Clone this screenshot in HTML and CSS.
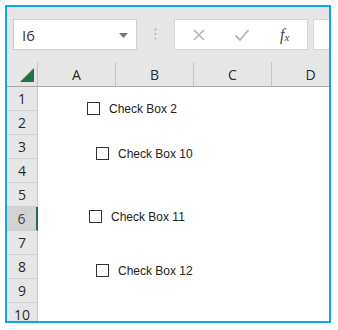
FILE: index.html
```html
<!DOCTYPE html>
<html>
<head>
<meta charset="utf-8">
<link rel="stylesheet" href="styles.css">
</head>
<body>
<div class="frame">
  <div class="toolbar">
    <div class="namebox">
      <span class="ref">I6</span>
      <svg class="caret" width="9" height="5" viewBox="0 0 9 5"><path d="M0 0H9L4.5 5Z" fill="#7a7a7a"/></svg>
    </div>
    <div class="dots">
      <svg width="3" height="12" viewBox="0 0 3 12"><circle cx="1.5" cy="1.5" r="1.1" fill="#b3b3b3"/><circle cx="1.5" cy="6" r="1.1" fill="#b3b3b3"/><circle cx="1.5" cy="10.5" r="1.1" fill="#b3b3b3"/></svg>
    </div>
    <div class="fbuttons">
      <svg class="btn" width="14" height="14" viewBox="0 0 14 14"><path d="M2 2L12 12M12 2L2 12" stroke="#b5b5b5" stroke-width="1.6" fill="none"/></svg>
      <svg class="btn" width="16" height="14" viewBox="0 0 16 14"><path d="M1.5 7.5L6 12L14.5 2" stroke="#b5b5b5" stroke-width="1.8" fill="none"/></svg>
      <span class="fx">f<sub>x</sub></span>
    </div>
    <div class="formula"></div>
  </div>
  <div class="sheet">
    <div class="headrow">
      <div class="corner"><svg width="14" height="14" viewBox="0 0 14 14"><path d="M14 0V14H0Z" fill="#217346"/></svg></div>
      <div class="colhead">A</div>
      <div class="colhead">B</div>
      <div class="colhead">C</div>
      <div class="colhead">D</div>
    </div>
    <div class="body">
      <div class="rowheads">
        <div class="rh">1</div>
        <div class="rh">2</div>
        <div class="rh">3</div>
        <div class="rh">4</div>
        <div class="rh">5</div>
        <div class="rh sel">6</div>
        <div class="rh">7</div>
        <div class="rh">8</div>
        <div class="rh">9</div>
        <div class="rh">10</div>
      </div>
      <div class="cells">
        <div class="cb" style="left:49px;top:14px"><span class="box"></span><span class="lbl">Check Box 2</span></div>
        <div class="cb" style="left:58px;top:59px"><span class="box"></span><span class="lbl">Check Box 10</span></div>
        <div class="cb" style="left:51px;top:122px"><span class="box"></span><span class="lbl">Check Box 11</span></div>
        <div class="cb" style="left:58px;top:176px"><span class="box"></span><span class="lbl">Check Box 12</span></div>
      </div>
    </div>
  </div>
</div>
</body>
</html>
```
FILE: styles.css
```css
html, body {
  margin: 0;
  padding: 0;
  background: #ffffff;
}
.frame {
  margin: 5px 0 0 5px;
  width: 322px;
  height: 314px;
  border: 2px solid #0ca6ea;
  overflow: hidden;
  background: #ffffff;
  display: flex;
  flex-direction: column;
}
.toolbar {
  height: 55px;
  flex: none;
  background: #e6e6e6;
  display: flex;
  align-items: flex-start;
  padding: 12px 0 0 6px;
  box-sizing: border-box;
  white-space: nowrap;
}
.namebox {
  width: 124px;
  height: 31px;
  box-sizing: border-box;
  background: #ffffff;
  border: 1px solid #cfcfcf;
  display: flex;
  align-items: center;
  justify-content: space-between;
  padding: 0 8px 0 8px;
  flex: none;
}
.ref {
  font-family: "Open Sans", "Noto Sans", sans-serif;
  font-size: 15px;
  color: #333;
}
.caret {
  margin-top: 1px;
}
.dots {
  width: 37px;
  flex: none;
  display: flex;
  justify-content: center;
  padding-top: 9px;
}
.fbuttons {
  width: 134px;
  height: 31px;
  flex: none;
  box-sizing: border-box;
  background: #ffffff;
  border: 1px solid #d6d6d6;
  display: flex;
  align-items: center;
  padding-left: 17px;
}
.btn {
  flex: none;
}
.btn + .btn {
  margin-left: 28px;
}
.fx {
  margin-left: 30px;
  font-family: "Liberation Serif", serif;
  font-style: italic;
  font-size: 16px;
  color: #444;
}
.fx sub {
  font-size: 11px;
  vertical-align: -1px;
}
.formula {
  margin-left: 5px;
  width: 60px;
  height: 31px;
  flex: none;
  box-sizing: border-box;
  background: #ffffff;
  border: 1px solid #d6d6d6;
}
.sheet {
  flex: 1;
  display: flex;
  flex-direction: column;
  font-family: "Open Sans", "Noto Sans", sans-serif;
}
.headrow {
  height: 25px;
  flex: none;
  display: flex;
  background: #e6e6e6;
  border-bottom: 1px solid #a9a9a9;
  box-sizing: border-box;
}
.corner {
  width: 31px;
  flex: none;
  box-sizing: border-box;
  border-right: 1px solid #c6c6c6;
  display: flex;
  align-items: flex-end;
  justify-content: flex-end;
  padding: 0 3px 4px 0;
}
.colhead {
  width: 78px;
  flex: none;
  box-sizing: border-box;
  border-right: 1px solid #c6c6c6;
  display: flex;
  align-items: center;
  justify-content: center;
  font-size: 14px;
  color: #2b2b2b;
}
.body {
  flex: 1;
  display: flex;
  min-height: 0;
}
.rowheads {
  width: 31px;
  flex: none;
  box-sizing: border-box;
  background: #e6e6e6;
  border-right: 1px solid #c6c6c6;
  display: flex;
  flex-direction: column;
}
.rh {
  height: 24px;
  flex: none;
  box-sizing: border-box;
  border-bottom: 1px solid #d0d0d0;
  display: flex;
  align-items: center;
  justify-content: center;
  font-size: 14px;
  color: #2b2b2b;
}
.rh.sel {
  background: #d2d2d2;
  color: #444;
  margin-right: -1px;
  border-right: 2px solid #217346;
}
.cells {
  flex: 1;
  position: relative;
  background: #ffffff;
}
.cb {
  position: absolute;
  display: flex;
  align-items: center;
  gap: 9px;
  white-space: nowrap;
}
.box {
  width: 13px;
  height: 13px;
  box-sizing: border-box;
  border: 1px solid #333;
  background: #fff;
  flex: none;
}
.lbl {
  font-family: "Liberation Sans", Arial, sans-serif;
  font-size: 12px;
  color: #222;
  padding-top: 1px;
}
```
